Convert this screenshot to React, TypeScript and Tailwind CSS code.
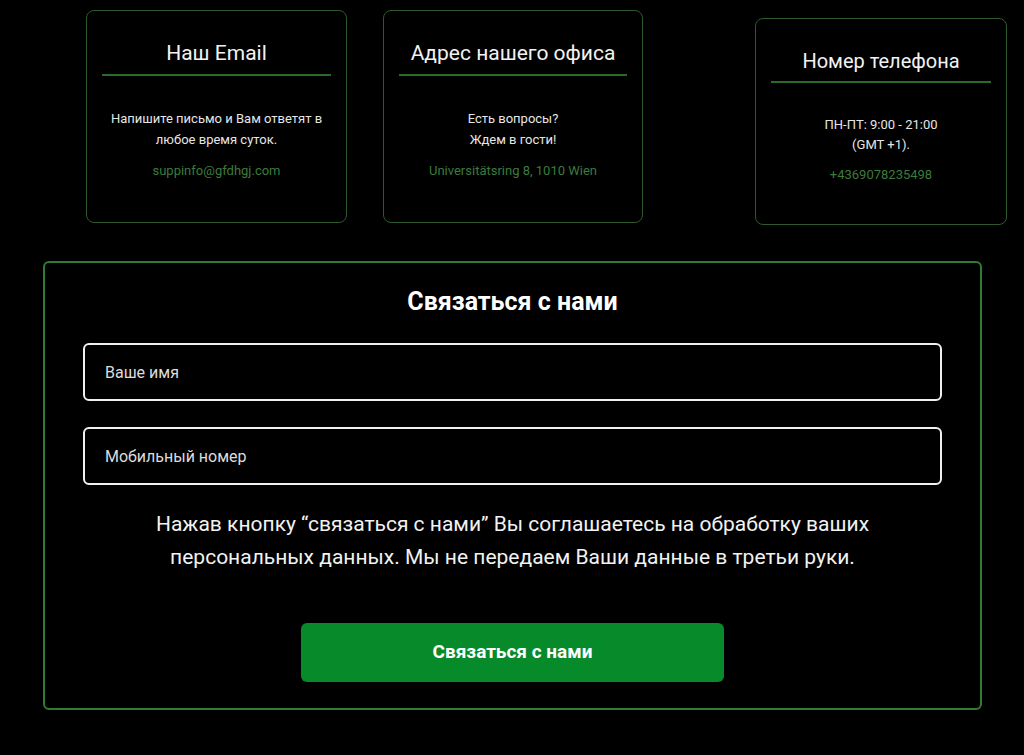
import React from "react";

interface InfoCardProps {
  title: string;
  lines: string[];
  link: string;
  compact?: boolean;
  className?: string;
}

const InfoCard = ({ title, lines, link, compact, className }: InfoCardProps) => {
  return (
    <div
      className={`flex flex-col items-center rounded-[8px] border border-[#2d5a2d] px-[15px] ${className ?? ""}`}
    >
      <h3
        className={`mt-[29px] leading-[26px] text-[#f2f2f2] ${compact ? "text-[20px]" : "text-[21px]"}`}
      >
        {title}
      </h3>
      <span
        className={`block w-full border-b-2 border-b-[#2a6a2a] ${compact ? "mt-[7px]" : "mt-[8px]"}`}
      />
      <div
        className={`text-center text-[13px] text-[#e6e6e6] ${compact ? "mt-[32px] leading-[20px]" : "mt-[32px] leading-[21px]"}`}
      >
        {lines.map((line) => (
          <p key={line}>{line}</p>
        ))}
      </div>
      <a
        className={`text-[13px] leading-[21px] text-[#3d7a3d] ${compact ? "mt-[9px]" : "mt-[10px]"}`}
      >
        {link}
      </a>
    </div>
  );
};

const App = () => {
  return (
    <div className="min-h-[755px] w-[1024px] bg-black font-['Roboto',sans-serif] text-white">
      <div className="flex items-start pt-[10px]">
        <InfoCard
          className="ml-[86px] h-[213px] w-[261px]"
          title="Наш Email"
          lines={["Напишите письмо и Вам ответят в", "любое время суток."]}
          link="suppinfo@gfdhgj.com"
        />
        <InfoCard
          className="ml-[36px] h-[213px] w-[260px]"
          title="Адрес нашего офиса"
          lines={["Есть вопросы?", "Ждем в гости!"]}
          link="Universitätsring 8, 1010 Wien"
        />
        <InfoCard
          compact
          className="ml-[112px] mt-[8px] h-[207px] w-[252px]"
          title="Номер телефона"
          lines={["ПН-ПТ: 9:00 - 21:00", "(GMT +1)."]}
          link="+4369078235498"
        />
      </div>

      <form className="ml-[43px] mt-[36px] flex h-[449px] w-[939px] flex-col items-center rounded-[6px] border-2 border-[#2f7d32] px-[38px]">
        <h2 className="mt-[23px] text-[25px] font-bold leading-[32px]">Связаться с нами</h2>
        <input
          className="mt-[25px] h-[58px] w-full rounded-[6px] border-2 border-[#f0f0f0] bg-black px-[20px] text-[16px] text-white outline-none placeholder:text-[#dcdcdc]"
          placeholder="Ваше имя"
        />
        <input
          className="mt-[26px] h-[58px] w-full rounded-[6px] border-2 border-[#f0f0f0] bg-black px-[20px] text-[16px] text-white outline-none placeholder:text-[#dcdcdc]"
          placeholder="Мобильный номер"
        />
        <p className="mt-[23px] text-center text-[21px] leading-[33px] text-[#f2f2f2]">
          Нажав кнопку “связаться с нами” Вы соглашаетесь на обработку ваших
          <br />
          персональных данных. Мы не передаем Ваши данные в третьи руки.
        </p>
        <button
          type="button"
          className="mt-[49px] h-[59px] w-[423px] rounded-[6px] bg-[#078a2a] text-[19px] font-bold text-white"
        >
          Связаться с нами
        </button>
      </form>
    </div>
  );
};

export default App;
